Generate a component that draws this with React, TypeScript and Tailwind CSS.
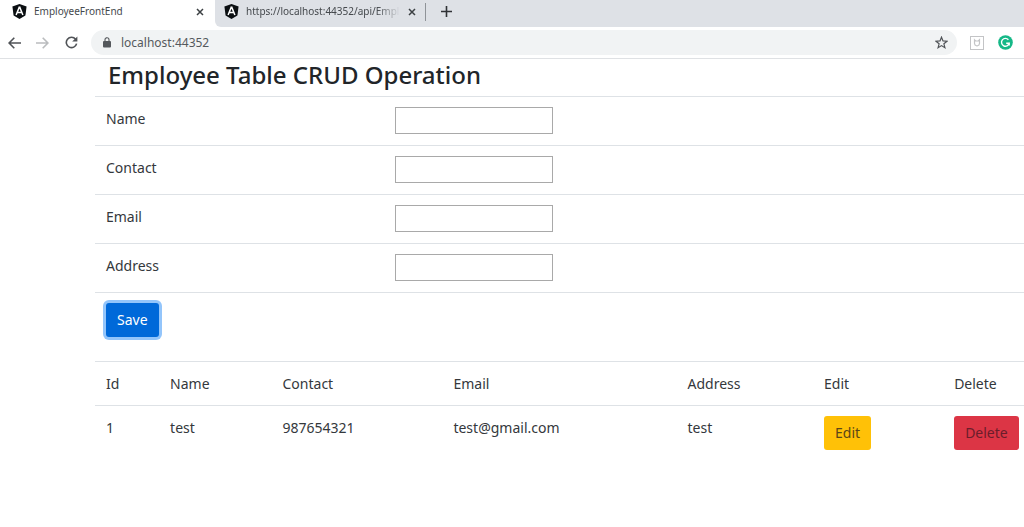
import React, { useState } from 'react';

interface Employee {
    id: number;
    name: string;
    contact: string;
    email: string;
    address: string;
}

const initialEmployees: Employee[] = [
    { id: 1, name: 'test', contact: '987654321', email: 'test@gmail.com', address: 'test' },
];

const formFields = [
    { id: 'name', label: 'Name' },
    { id: 'contact', label: 'Contact' },
    { id: 'email', label: 'Email' },
    { id: 'address', label: 'Address' },
];

const columns = [
    { label: 'Id', width: 'w-[6.9%]' },
    { label: 'Name', width: 'w-[12.1%]' },
    { label: 'Contact', width: 'w-[18.4%]' },
    { label: 'Email', width: 'w-[25.2%]' },
    { label: 'Address', width: 'w-[14.7%]' },
    { label: 'Edit', width: 'w-[14%]' },
    { label: 'Delete', width: '' },
];

const AngularIcon = () => (
    <svg className="h-[15px] w-[15px] shrink-0" viewBox="0 0 15 15">
        <path d="M7.5 0 L14.6 2.5 L13.4 11.6 L7.5 15 L1.6 11.6 L0.4 2.5 Z" fill="#0b0f12" />
        <path d="M7.5 2.6 L4.1 11 M7.5 2.6 L10.9 11 M5.4 8.6 H9.6" fill="none" stroke="#fff" strokeWidth="1.5" />
    </svg>
);

const CloseIcon = () => (
    <svg className="h-2 w-2" viewBox="0 0 8 8">
        <path d="M1 1 L7 7 M7 1 L1 7" stroke="#3c4043" strokeWidth="1.5" />
    </svg>
);

const TabStrip = () => (
    <div className="flex h-[27px] bg-white text-[10px] text-[#45494d]">
        <div className="flex w-[215px] shrink-0 items-center pr-[11px] pb-1 pl-3">
            <AngularIcon />
            <span className="ml-[7px] flex-1 whitespace-nowrap">EmployeeFrontEnd</span>
            <button type="button" aria-label="Close tab"><CloseIcon /></button>
        </div>
        <div className="flex flex-1 items-center rounded-bl-md bg-[#dee1e6] pb-1 pl-[9px]">
            <AngularIcon />
            <span className="ml-[7px] w-[154px] whitespace-nowrap [mask-image:linear-gradient(to_right,black_85%,transparent)]">
                https://localhost:44352/api/Empl
            </span>
            <button type="button" aria-label="Close tab" className="ml-2"><CloseIcon /></button>
            <span className="ml-[9px] h-[18px] w-px bg-[#8f9398]" />
            <button type="button" aria-label="New tab" className="ml-[15px]">
                <svg className="h-[11px] w-[11px]" viewBox="0 0 11 11">
                    <path d="M5.5 0 V11 M0 5.5 H11" stroke="#303236" strokeWidth="1.6" />
                </svg>
            </button>
        </div>
    </div>
);

const Toolbar = () => (
    <div className="flex h-8 items-center border-b border-[#dfe1e4] bg-white pr-[11px] pl-2">
        <button type="button" aria-label="Back">
            <svg className="h-3 w-[13px]" viewBox="0 0 13 12" fill="none" stroke="#505357" strokeWidth="1.6">
                <path d="M13 6 H1.2 M6.3 0.8 L1.1 6 L6.3 11.2" />
            </svg>
        </button>
        <button type="button" aria-label="Forward" className="ml-[15px]">
            <svg className="h-3 w-[13px]" viewBox="0 0 13 12" fill="none" stroke="#babcbe" strokeWidth="1.6">
                <path d="M0 6 H11.8 M6.7 0.8 L11.9 6 L6.7 11.2" />
            </svg>
        </button>
        <button type="button" aria-label="Reload" className="ml-4">
            <svg className="h-[13px] w-[13px]" viewBox="0 0 13 13">
                <path d="M10.6 3.2 A5.2 5.2 0 1 0 11.6 7.6" fill="none" stroke="#505357" strokeWidth="1.6" />
                <path d="M12.4 0.4 V5.6 H7.2 Z" fill="#505357" />
            </svg>
        </button>
        <div className="ml-[13px] flex h-[25px] flex-1 items-center rounded-full bg-[#f1f3f4] pr-[9px] pl-3">
            <svg className="h-[11px] w-2 shrink-0" viewBox="0 0 8 11">
                <path d="M2 5 V2.8 A2 2 0 0 1 6 2.8 V5" fill="none" stroke="#55585c" strokeWidth="1.1" />
                <rect y="4" width="8" height="6.6" rx="1" fill="#55585c" />
            </svg>
            <input
                aria-label="Address bar"
                defaultValue="localhost:44352"
                className="ml-[10px] min-w-0 flex-1 bg-transparent text-xs text-[#55595d] outline-none"
            />
            <button type="button" aria-label="Bookmark this page">
                <svg className="h-[13px] w-[13px]" viewBox="0 0 13 13">
                    <path
                        d="M6.5 1.2 L8 4.9 L12 5.2 L8.9 7.8 L9.9 11.7 L6.5 9.6 L3.1 11.7 L4.1 7.8 L1 5.2 L5 4.9 Z"
                        fill="none"
                        stroke="#505357"
                        strokeWidth="1.2"
                    />
                </svg>
            </button>
        </div>
        <button type="button" aria-label="Shield extension" className="ml-[13px]">
            <svg className="h-[14px] w-[14px]" viewBox="0 0 14 14" fill="none" stroke="#c3c4c6">
                <rect x="0.5" y="0.5" width="13" height="13" />
                <path d="M4.5 3.8 L5.7 5 H8.3 L9.5 3.8 V7.5 Q9.5 9.3 7 10 Q4.5 9.3 4.5 7.5 Z" strokeWidth="1.2" />
            </svg>
        </button>
        <button type="button" aria-label="Grammar extension" className="ml-[14px]">
            <svg className="h-[15px] w-[15px]" viewBox="0 0 15 15">
                <circle cx="7.5" cy="7.5" r="7.3" fill="#15b887" />
                <path d="M10.4 4.8 A3.9 3.9 0 1 0 11.2 8.3 H8.2 M11.2 8 V10.6" fill="none" stroke="#fff" strokeWidth="1.4" />
            </svg>
        </button>
    </div>
);

const App: React.FC = () => {
    const [employees, setEmployees] = useState<Employee[]>(initialEmployees);
    const [form, setForm] = useState<Record<string, string>>({});

    const handleSave = (e: React.FormEvent) => {
        e.preventDefault();
        if (!form.name) {
            return;
        }
        setEmployees(list => [
            ...list,
            {
                id: list.length + 1,
                name: form.name,
                contact: form.contact ?? '',
                email: form.email ?? '',
                address: form.address ?? '',
            },
        ]);
        setForm({});
    };

    const handleEdit = (employee: Employee) => {
        const { name, contact, email, address } = employee;
        setForm({ name, contact, email, address });
    };

    const handleDelete = (id: number) => {
        setEmployees(list => list.filter(employee => employee.id !== id));
    };

    return (
        <div className="min-h-screen bg-white font-['Segoe_UI','Noto_Sans',sans-serif] text-[#34383c]">
            <TabStrip />
            <Toolbar />

            <main className="ml-[95px] text-sm">
                <h1 className="pb-[5px] pl-[13px] text-2xl leading-8 font-medium text-[#212529]">
                    Employee Table CRUD Operation
                </h1>

                <form onSubmit={handleSave}>
                    {formFields.map(field => (
                        <div key={field.id} className="flex h-[49px] border-t border-[#dee2e6] pt-[10px]">
                            <label htmlFor={field.id} className="w-[32.3%] pt-0.5 pl-[11px]">{field.label}</label>
                            <input
                                id={field.id}
                                value={form[field.id] ?? ''}
                                onChange={e => setForm({ ...form, [field.id]: e.target.value })}
                                className="h-[27px] w-[158px] border border-[#a9a9a9] px-1"
                            />
                        </div>
                    ))}
                    <div className="border-t border-[#dee2e6] pt-[10px] pb-6 pl-[11px]">
                        <button
                            type="submit"
                            className="block h-[34px] rounded-[3px] bg-[#0069d9] px-[11px] text-white ring-3 ring-[#93c5fb]"
                        >
                            Save
                        </button>
                    </div>
                </form>

                <table className="w-full table-fixed text-left">
                    <thead>
                        <tr className="h-11 border-t border-[#dee2e6]">
                            {columns.map(column => (
                                <th key={column.label} className={`pl-[11px] font-normal ${column.width}`}>
                                    {column.label}
                                </th>
                            ))}
                        </tr>
                    </thead>
                    <tbody>
                        {employees.map(employee => (
                            <tr key={employee.id} className="border-t border-[#dee2e6] align-top">
                                <td className="pt-3 pl-[11px]">{employee.id}</td>
                                <td className="pt-3 pl-[11px]">{employee.name}</td>
                                <td className="pt-3 pl-[11px]">{employee.contact}</td>
                                <td className="pt-3 pl-[11px]">{employee.email}</td>
                                <td className="pt-3 pl-[11px]">{employee.address}</td>
                                <td className="py-[10px] pl-[11px]">
                                    <button
                                        type="button"
                                        onClick={() => handleEdit(employee)}
                                        className="block h-[34px] rounded-[3px] bg-[#ffc107] px-[11px] text-[#5b4617]"
                                    >
                                        Edit
                                    </button>
                                </td>
                                <td className="py-[10px] pl-[11px]">
                                    <button
                                        type="button"
                                        onClick={() => handleDelete(employee.id)}
                                        className="block h-[34px] rounded-[3px] bg-[#dc3545] px-[11px] text-[#6b1d2b]"
                                    >
                                        Delete
                                    </button>
                                </td>
                            </tr>
                        ))}
                    </tbody>
                </table>
            </main>
        </div>
    );
};

export default App;
